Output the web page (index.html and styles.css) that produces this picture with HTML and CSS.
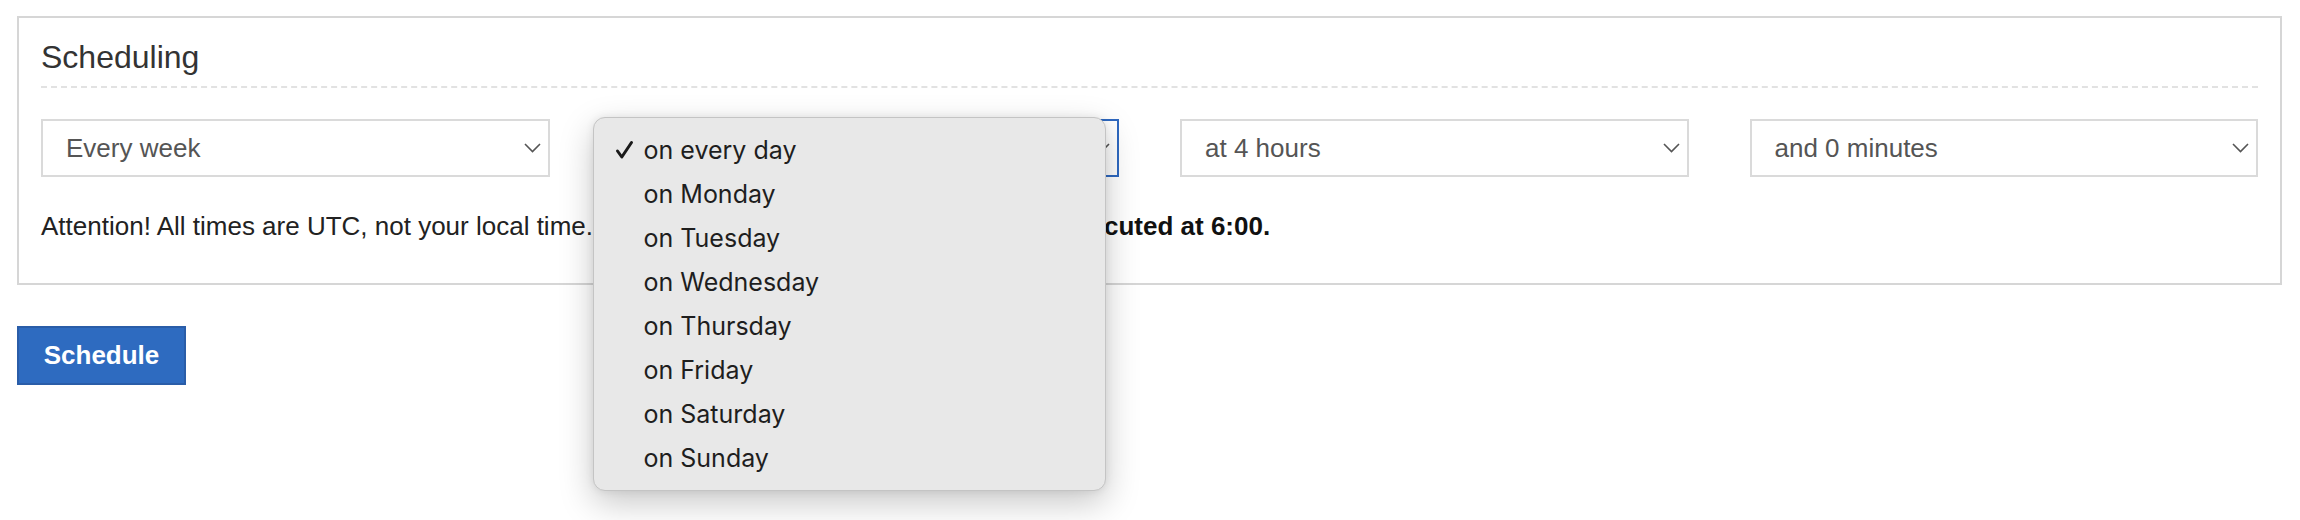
FILE: index.html
```html
<!DOCTYPE html>
<html lang="en">
<head>
<meta charset="UTF-8">
<title>Scheduling</title>
<link rel="stylesheet" href="styles.css">
</head>
<body>
<div class="page">
    <div class="panel">
        <h2 class="panel-title">Scheduling</h2>

        <div class="fields">
            <div class="pick">
                <span>Every week</span>
                <svg class="chevron" width="17" height="10" viewBox="0 0 17 10"><path d="M1 1l7.5 7.5L16 1" fill="none" stroke="#555" stroke-width="1.6"/></svg>
            </div>

            <div class="pick-wrap">
                <div class="pick focused">
                    <span></span>
                    <svg class="chevron" width="17" height="10" viewBox="0 0 17 10"><path d="M1 1l7.5 7.5L16 1" fill="none" stroke="#555" stroke-width="1.6"/></svg>
                </div>
                <!-- open native menu -->
                <ul class="menu">
                    <li class="checked"><svg class="tick" width="19" height="20" viewBox="0 0 19 20"><path d="M2.5 11l4.3 6L16.5 2.5" fill="none" stroke="#1a1a1a" stroke-width="3" stroke-linecap="round" stroke-linejoin="round"/></svg>on every day</li>
                    <li>on Monday</li>
                    <li>on Tuesday</li>
                    <li>on Wednesday</li>
                    <li>on Thursday</li>
                    <li>on Friday</li>
                    <li>on Saturday</li>
                    <li>on Sunday</li>
                </ul>
            </div>

            <div class="pick">
                <span>at 4 hours</span>
                <svg class="chevron" width="17" height="10" viewBox="0 0 17 10"><path d="M1 1l7.5 7.5L16 1" fill="none" stroke="#555" stroke-width="1.6"/></svg>
            </div>

            <div class="pick">
                <span>and 0 minutes</span>
                <svg class="chevron" width="17" height="10" viewBox="0 0 17 10"><path d="M1 1l7.5 7.5L16 1" fill="none" stroke="#555" stroke-width="1.6"/></svg>
            </div>
        </div>

        <p class="note">Attention! All times are UTC, not your local time. <strong>Your next scheduled sync job will be executed at 6:00.</strong></p>
    </div>

    <button class="btn" type="button">Schedule</button>
</div>
</body>
</html>
```

FILE: styles.css
```css
html {
background: #fff;
}
body {
margin: 0;
background: #fff;
font-family: "Liberation Sans", Arial, sans-serif;
color: #222;
}
.page {
min-height: 504px;
padding: 16px 18px 0 17px;
}
.panel {
border: 2px solid #d6d6d6;
padding: 21px 22px 41px 22px;
}
.panel-title {
margin: 0;
font-size: 32px;
font-weight: normal;
color: #333;
line-height: 37px;
padding-bottom: 10px;
border-bottom: 2px dashed #e2e2e2;
}
.fields {
display: grid;
grid-template-columns: repeat(4, 1fr);
gap: 61px;
margin-top: 31px;
}
.pick-wrap {
position: relative;
}
.pick {
display: flex;
align-items: center;
justify-content: space-between;
height: 58px;
box-sizing: border-box;
border: 2px solid #dadada;
padding: 0 7px 0 23px;
font-size: 26px;
color: #555;
background: #fff;
}
.pick.focused {
border-color: #2f69c0;
}
.chevron {
display: block;
}
.menu {
position: absolute;
left: -18px;
top: -2px;
width: 513px;
box-sizing: border-box;
margin: 0;
padding: 10px 0;
list-style: none;
background: #e8e8e8;
border: 1px solid #c4c4c4;
border-radius: 12px;
box-shadow: 0 12px 34px rgba(0, 0, 0, 0.22), 0 0 8px rgba(0, 0, 0, 0.08);
font-family: Inter, "Noto Sans", sans-serif;
font-size: 25px;
color: #1e1e1e;
z-index: 5;
}
.menu li {
display: flex;
align-items: center;
height: 44px;
padding-left: 50px;
}
.menu li.checked {
padding-left: 21px;
}
.tick {
margin-right: 10px;
}
.note {
margin: 34px 0 0 0;
font-size: 26px;
color: #222;
}
.note strong {
color: #111;
}
.btn {
margin-top: 41px;
width: 169px;
height: 59px;
background: #2e6bc0;
border: 2px solid #2a5da8;
color: #fff;
font-family: "Liberation Sans", Arial, sans-serif;
font-size: 26px;
font-weight: bold;
cursor: pointer;
}
```
